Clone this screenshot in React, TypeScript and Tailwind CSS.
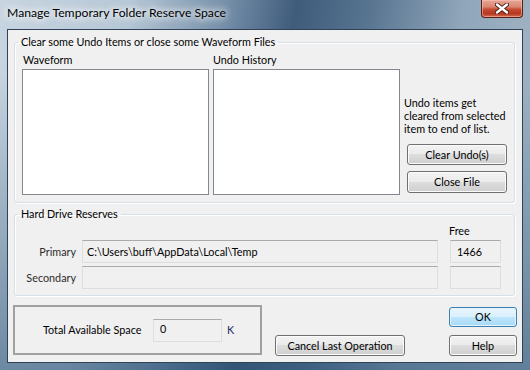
import React from "react";

const btn =
  "flex items-center justify-center rounded-[3px] border border-[#707070] bg-[linear-gradient(#f2f2f2_0%,#ebebeb_48%,#dddddd_50%,#cfcfcf_100%)] shadow-[inset_0_0_0_1px_#fbfbfb] text-black leading-[14px]";

const okBtn =
  "flex items-center justify-center rounded-[3px] border border-[#3c7fb1] bg-[linear-gradient(#eaf6fd_0%,#d9f0fc_48%,#bee6fd_50%,#a7d9f5_100%)] shadow-[inset_0_0_0_1px_#e4f4fd] text-black leading-[14px]";

const group =
  "border border-[#d5dfe5] rounded-[3px] shadow-[1px_1px_0_#ffffff,inset_1px_1px_0_#ffffff]";

const field = "bg-[#f0f0f0] border border-[#dedede] border-t-[#aaaaaa]";

const listBox = "w-[187px] h-[126px] bg-white border border-[#828790]";

export default function App() {
  return (
    <div className="w-[530px] h-[370px] flex flex-col overflow-hidden font-['Lato',sans-serif] text-[10.8px] leading-[14px] text-black bg-[linear-gradient(180deg,rgba(0,0,0,0)_0%,rgba(0,0,0,0)_20%,rgba(40,80,115,0.55)_100%),linear-gradient(100deg,#c8d5e1_0%,#b6c7d6_22%,#7690aa_38%,#3f5c7b_50%,#56738f_62%,#90a6ba_78%,#a8bac9_100%)]">
      {/* Title bar */}
      <div className="h-[29px] shrink-0 flex items-start">
        <div className="ml-[7px] mt-[5px] text-[12.2px] leading-[16px] [text-shadow:0_0_6px_#ffffff,0_0_10px_#ffffff,0_0_14px_rgba(255,255,255,0.8)]">
          Manage Temporary Folder Reserve Space
        </div>
        <div className="ml-auto mr-[7px] w-[42px] h-[18px] rounded-b-[4px] border border-t-0 border-[#5a2016] bg-[linear-gradient(#e7a797_0%,#d98773_40%,#c54b33_55%,#b73720_80%,#d56a50_100%)] shadow-[inset_0_0_0_1px_rgba(255,200,190,0.5)] flex items-center justify-center">
          <svg width="14" height="11" viewBox="0 0 14 11">
            <path d="M2 1.5 L12 9.5 M12 1.5 L2 9.5" stroke="#4a1a12" strokeWidth="4.2" strokeLinecap="round" fill="none" />
            <path d="M2 1.5 L12 9.5 M12 1.5 L2 9.5" stroke="#ffffff" strokeWidth="2.4" strokeLinecap="round" fill="none" />
          </svg>
        </div>
      </div>

      {/* Client area */}
      <div className="mx-[7px] mb-[7px] flex-1 flex flex-col bg-[#f0f0f0] border border-[#2f4256]">
        {/* Undo / waveform group */}
        <fieldset className={`mt-[5px] ml-[6px] mr-[7px] pl-[3px] pb-[7px] ${group}`}>
          <legend className="px-[3px] leading-[14px]">Clear some Undo Items or close some Waveform Files</legend>
          <div className="flex ml-[4px]">
            <div className="flex flex-col">
              <div className="mt-[4px] ml-[1px] leading-[14px]">Waveform</div>
              <div className={`mt-[2px] ${listBox}`} />
            </div>
            <div className="flex flex-col ml-[4px]">
              <div className="mt-[4px] leading-[14px]">Undo History</div>
              <div className={`mt-[2px] ${listBox}`} />
            </div>
            <div className="flex flex-col ml-[4px]">
              <div className="mt-[47px] leading-[13px]">
                Undo items get
                <br />
                cleared from selected
                <br />
                item to end of list.
              </div>
              <button type="button" className={`mt-[9px] ml-[3px] w-[100px] h-[21px] ${btn}`}>
                Clear Undo(s)
              </button>
              <button type="button" className={`mt-[6px] ml-[3px] w-[100px] h-[22px] ${btn}`}>
                Close File
              </button>
            </div>
          </div>
        </fieldset>

        {/* Hard drive group */}
        <fieldset className={`mt-[4px] ml-[6px] mr-[7px] pl-[3px] pb-[6px] ${group}`}>
          <legend className="px-[3px] leading-[14px]">Hard Drive Reserves</legend>
          <div className="flex flex-col ml-[4px]">
            <div className="flex mt-[3px]">
              <div className="w-[427px]" />
              <div className="leading-[14px]">Free</div>
            </div>
            <div className="flex items-center mt-[2px]">
              <div className="w-[54px] text-right text-[#2a2a2a]">Primary</div>
              <div className={`ml-[6px] w-[356px] h-[23px] pl-[4px] flex items-center ${field}`}>
                {"C:\\Users\\buff\\AppData\\Local\\Temp"}
              </div>
              <div className={`ml-[12px] w-[51px] h-[23px] pl-[6px] flex items-center ${field}`}>1466</div>
            </div>
            <div className="flex items-center mt-[3px]">
              <div className="w-[54px] text-right text-[#2a2a2a]">Secondary</div>
              <div className={`ml-[6px] w-[356px] h-[23px] ${field}`} />
              <div className={`ml-[12px] w-[51px] h-[23px] ${field}`} />
            </div>
          </div>
        </fieldset>

        {/* Bottom row */}
        <div className="flex items-start mt-[9px] ml-[5px]">
          <div className="w-[249px] h-[50px] border-2 border-[#a0a0a0] flex items-center pl-[28px]">
            <span className="w-[110px]">Total Available Space</span>
            <div className={`w-[69px] h-[23px] pl-[6px] pt-[2px] ${field}`}>0</div>
            <span className="ml-[5px] text-[#1b2f5e]">K</span>
          </div>
          <button type="button" className={`ml-[13px] mt-[30px] w-[130px] h-[21px] ${btn}`}>
            Cancel Last Operation
          </button>
          <div className="ml-[44px] mt-[2px] flex flex-col">
            <button type="button" className={`w-[68px] h-[20px] ${okBtn}`}>
              OK
            </button>
            <button type="button" className={`mt-[8px] w-[68px] h-[21px] ${btn}`}>
              Help
            </button>
          </div>
        </div>
      </div>
    </div>
  );
}
